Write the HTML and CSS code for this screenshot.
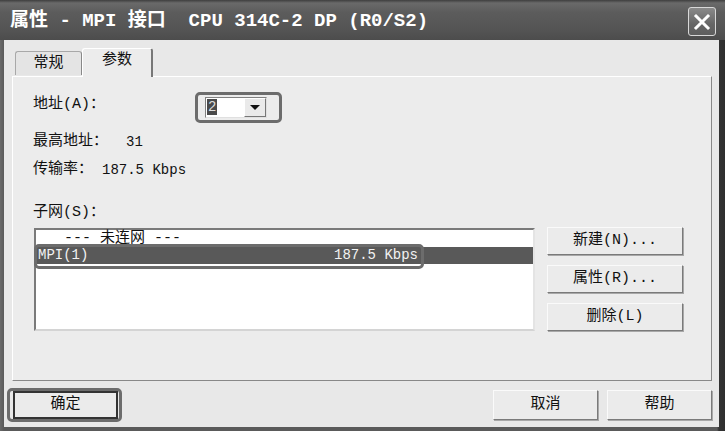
FILE: index.html
```html
<!DOCTYPE html>
<html lang="zh">
<head>
<meta charset="utf-8">
<title>属性 - MPI 接口</title>
<link rel="stylesheet" href="styles.css">
</head>
<body>
<div class="window">
  <div class="titlebar">
    <div class="title">属性 - MPI 接口  CPU 314C-2 DP (R0/S2)</div>
    <div class="close">
      <svg width="18" height="18" viewBox="0 0 18 18"><path d="M3 3 L15 15 M15 3 L3 15" stroke="#fff" stroke-width="3" stroke-linecap="square"/></svg>
    </div>
  </div>
  <div class="client">
    <div class="tabs">
      <div class="tab">常规</div>
      <div class="tab active">参数</div>
    </div>
    <div class="panel">
      <div class="row addr">
        <div class="label">地址<span class="acc">(A)</span>：</div>
        <div class="hl combo-hl">
          <div class="combo">
            <div class="combo-val"><span class="sel">2</span></div>
            <div class="combo-btn"><span class="tri"></span></div>
          </div>
        </div>
      </div>
      <div class="row line r2">最高地址：  <span class="num">31</span></div>
      <div class="row line r3">传输率： <span class="num">187.5 Kbps</span></div>
      <div class="row line r4">子网<span class="acc">(S)</span>：</div>
      <div class="subnet">
        <div class="listbox">
          <div class="item first">--- 未连网 ---</div>
          <div class="item selected"><span class="name">MPI(1)</span><span class="rate">187.5 Kbps</span></div>
          <div class="row-hl"></div>
        </div>
        <div class="side">
          <div class="btn">新建<span class="acc">(N)...</span></div>
          <div class="btn">属性<span class="acc">(R)...</span></div>
          <div class="btn">删除<span class="acc">(L)</span></div>
        </div>
      </div>
    </div>
    <div class="bottom">
      <div class="hl ok-hl"><div class="btn default">确定</div></div>
      <div class="spacer"></div>
      <div class="btn wide">取消</div>
      <div class="btn wide">帮助</div>
    </div>
  </div>
</div>
</body>
</html>
```
FILE: styles.css
```css
html, body {
  margin: 0;
  padding: 0;
  width: 725px;
  height: 431px;
  overflow: hidden;
  background: #3c3c3c;
}
body {
  font-family: "Liberation Mono", "Noto Sans CJK SC", monospace;
  font-size: 15px;
  color: #111;
}
.window {
  width: 725px;
  height: 431px;
  display: flex;
  flex-direction: column;
  background: linear-gradient(90deg, #6a6a6a 0, #5a5a5a 4px, #5a5a5a 717px, #333 719px, #2e2e2e 725px);
}
.titlebar {
  height: 40px;
  display: flex;
  align-items: center;
  justify-content: space-between;
  padding: 0 9px 0 10px;
  background: linear-gradient(180deg, #3e3e3e 0, #6a6a6a 3px, #5c5c5c 12px, #545454 30px, #4c4c4c 40px);
}
.title {
  color: #fff;
  font-weight: bold;
  font-size: 19px;
  white-space: pre;
  line-height: 22px;
  padding-top: 1px;
}
.close {
  width: 26px;
  height: 27px;
  border: 1px solid #d8d8d8;
  border-radius: 3px;
  background: linear-gradient(180deg, #8a8a8a, #666 60%, #5e5e5e);
  display: flex;
  align-items: center;
  justify-content: center;
  margin-top: 3px;
}
.client {
  flex: 1;
  margin: 0 6px 4px 4px;
  background: #e8e8e8;
  display: flex;
  flex-direction: column;
}
.tabs {
  height: 36px;
  display: flex;
  align-items: flex-end;
  padding-left: 11px;
  position: relative;
  z-index: 1;
}
.tab {
  height: 23px;
  width: 65px;
  border: 1px solid #a8a8a8;
  border-bottom: none;
  border-right: 1px solid #888;
  border-radius: 3px 3px 0 0;
  background: #e4e4e4;
  text-align: center;
  line-height: 24px;
  margin-bottom: 1px;
}
.tab.active {
  height: 28px;
  width: 68px;
  background: #ececec;
  border-left: 1px solid #fff;
  border-top: 1px solid #fff;
  border-right: 2px solid #777;
  margin-bottom: -1px;
  line-height: 24px;
}
.panel {
  margin: 0 7px 0 8px;
  height: 303px;
  background: #ececec;
  border-top: 1px solid #fff;
  border-left: 1px solid #fff;
  border-right: 1px solid #888;
  border-bottom: 1px solid #888;
  padding-left: 20px;
  display: flex;
  flex-direction: column;
}
.row { display: flex; }
.line { height: 20px; line-height: 20px; white-space: pre; }
.addr {
  margin-top: 15px;
  height: 31px;
}
.label {
  width: 162px;
  line-height: 20px;
  padding-top: 3px;
}
.acc { font-size: 15px; }
.num { font-size: 14px; }
.hl {
  border: 3px solid #6c6c6c;
  border-radius: 5px;
}
.combo-hl {
  width: 67px;
  height: 21px;
  padding: 2px 7px 2px 7px;
}
.combo {
  width: 60px;
  height: 19px;
  border-top: 1px solid #808080;
  border-left: 1px solid #808080;
  border-right: 1px solid #e0e0e0;
  border-bottom: 1px solid #e0e0e0;
  background: #fff;
  display: flex;
}
.combo-val { flex: 1; padding: 1px 0 0 1px; }
.sel {
  display: inline-block;
  background: #4a4a4a;
  color: #ddd;
  font-size: 14px;
  line-height: 16px;
  padding: 0 1px;
}
.combo-btn {
  width: 22px;
  background: #eaeaea;
  border-left: 1px solid #fff;
  border-top: 1px solid #fff;
  border-right: 1px solid #777;
  border-bottom: 1px solid #777;
  box-sizing: border-box;
  display: flex;
  align-items: center;
  justify-content: center;
}
.tri {
  width: 0; height: 0;
  border-left: 5px solid transparent;
  border-right: 5px solid transparent;
  border-top: 5px solid #111;
}
.r2 { margin-top: 9px; }
.r3 { margin-top: 8px; }
.r4 { margin-top: 23px; }
.subnet {
  display: flex;
  margin-top: 4px;
  align-items: flex-start;
}
.listbox {
  position: relative;
  margin-left: 1px;
  margin-top: 1px;
  width: 497px;
  height: 99px;
  background: #fff;
  border-top: 2px solid #7a7a7a;
  border-left: 2px solid #7a7a7a;
  border-right: 2px solid #e4e4e4;
  border-bottom: 2px solid #d4d4d4;
}
.item {
  height: 17px;
  line-height: 17px;
  font-size: 14px;
  white-space: pre;
}
.item.first { padding-left: 28px; font-size: 15px; }
.item.selected {
  background: #595959;
  color: #f2f2f2;
  display: flex;
  padding-left: 2px;
}
.name { width: 295px; }
.rate { width: 85px; text-align: right; }
.row-hl {
  position: absolute;
  left: -2px;
  top: 14px;
  width: 384px;
  height: 19px;
  border: 3px solid #6c6c6c;
  border-radius: 5px;
}
.side {
  margin-left: 12px;
  display: flex;
  flex-direction: column;
  gap: 10px;
}
.btn {
  width: 134px;
  height: 26px;
  background: #ebebeb;
  border-top: 1px solid #fafafa;
  border-left: 1px solid #fafafa;
  border-right: 1px solid #7a7a7a;
  border-bottom: 1px solid #7a7a7a;
  box-shadow: 1px 1px 0 #a8a8a8;
  display: flex;
  align-items: center;
  justify-content: center;
  line-height: 20px;
  white-space: pre;
}
.bottom {
  margin-top: 7px;
  height: 34px;
  display: flex;
  align-items: center;
  padding: 0 7px 0 3px;
}
.ok-hl {
  padding: 0 1px 0 3px;
  height: 28px;
  display: flex;
  align-items: center;
}
.btn.default {
  width: 101px;
  height: 24px;
  border: 2px solid #333;
  box-shadow: none;
}
.spacer { flex: 1; }
.btn.wide {
  width: 103px;
  height: 28px;
  margin-left: 9px;
}
```
